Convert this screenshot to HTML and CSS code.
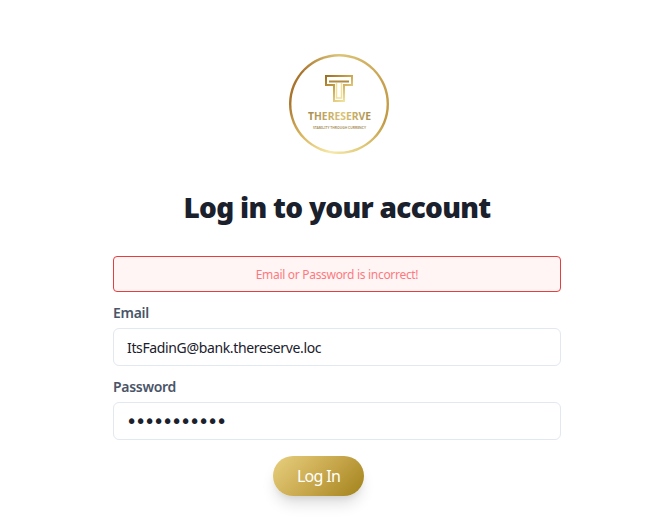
FILE: index.html
```html
<!DOCTYPE html>
<html lang="en">
<head>
<meta charset="utf-8">
<title>Log in</title>
<link rel="stylesheet" href="styles.css">
</head>
<body>
<main class="page">
  <div class="logo">
    <svg class="logo-svg" width="100" height="100" viewBox="0 0 100 100" xmlns="http://www.w3.org/2000/svg">
      <defs>
        <linearGradient id="tee" x1="0" y1="0" x2="0.8" y2="1">
          <stop offset="0" stop-color="#9c6f22"/>
          <stop offset="0.45" stop-color="#c9a44e"/>
          <stop offset="1" stop-color="#f4e8a4"/>
        </linearGradient>
        <linearGradient id="word" x1="0" y1="0" x2="1" y2="0">
          <stop offset="0" stop-color="#a58a4e"/>
          <stop offset="0.55" stop-color="#dcc375"/>
          <stop offset="1" stop-color="#a88c4c"/>
        </linearGradient>
      </defs>
      <circle cx="50" cy="50" r="47.600" fill="#fff"/>
      <path d="M37 22H63V31H55V47H45V31H37Z" fill="#fff" stroke="url(#tee)" stroke-width="2"/>
      <path d="M47.500 29V44H52.500V29" fill="none" stroke="#efe09c" stroke-width="1.500"/>
      <path d="M40 27.500H60" stroke="#b08a3e" stroke-width="1.800"/>
      <text class="logo-word" x="50.500" y="65.500" text-anchor="middle" textLength="63" lengthAdjust="spacingAndGlyphs" fill="url(#word)">THERESERVE</text>
      <text class="logo-tag" x="50.500" y="74.500" text-anchor="middle" textLength="53" lengthAdjust="spacingAndGlyphs">STABILITY THROUGH CURRENCY</text>
    </svg>
  </div>
  <h1 class="title">Log in to your account</h1>
  <form class="form">
    <div class="alert">Email or Password is incorrect!</div>
    <label class="label" for="email">Email</label>
    <input class="input" id="email" type="text" value="ItsFadinG@bank.thereserve.loc">
    <label class="label" for="password">Password</label>
    <input class="input input-password" id="password" type="password" value="passwordxyz">
    <button class="button" type="button">Log In</button>
  </form>
</main>
</body>
</html>
```
FILE: styles.css
```css
* { box-sizing: border-box; }
html, body { margin: 0; padding: 0; background: #fff; }
body { font-family: "Noto Sans", sans-serif; color: #1a202c; min-height: 527px; }
.page {
  width: 448px;
  margin-left: 113px;
  padding-top: 54px;
  display: flex;
  flex-direction: column;
}
.logo { display: flex; justify-content: center; padding-left: 4px; height: 100px; }
.logo-svg {
  display: block;
  border-radius: 50%;
  background: conic-gradient(#dcc578 0deg, #c9a24f 60deg, #c09a45 110deg, #e0c878 150deg, #f6e9a8 190deg, #d9b660 230deg, #a9762f 270deg, #a8742c 310deg, #dcc578 360deg);
}
.logo-word { font: 700 10px "Noto Sans", sans-serif; }
.logo-tag { font: 600 3.600px "Noto Sans", sans-serif; fill: #a58a4e; }
.title {
  margin: 33px 0 0;
  text-align: center;
  font-size: 28px;
  letter-spacing: -0.7px;
  line-height: 40px;
  font-weight: 900;
  color: #1a202c;
}
.form { display: flex; flex-direction: column; margin-top: 29px; }
.alert {
  height: 36px;
  border: 1px solid #e53e3e;
  border-radius: 4px;
  background: #fff5f5;
  color: #fc7a7f;
  font-size: 12px;
  letter-spacing: -0.3px;
  line-height: 36px;
  text-align: center;
}
.label {
  margin-top: 11px;
  font-size: 14px;
  letter-spacing: -0.3px;
  line-height: 20px;
  font-weight: 600;
  color: #4a5568;
}
.input {
  margin-top: 5px;
  height: 38px;
  width: 100%;
  padding: 0 13px;
  border: 1px solid #e2e8f0;
  border-radius: 6px;
  background: #fff;
  color: #1a202c;
  font: 400 14px "Noto Sans", sans-serif;
  letter-spacing: -0.36px;
  outline: none;
}
.input-password {
  font-family: "DejaVu Sans", sans-serif;
  font-size: 19px;
  letter-spacing: -2.2px;
  padding-left: 12px;
}
.button {
  align-self: flex-start;
  margin: 16px 0 0 160px;
  width: 91px;
  height: 40px;
  border: 0;
  border-radius: 20px;
  background: linear-gradient(135deg, #e8cf7f 0%, #c9a94e 50%, #a1821a 100%);
  color: #fff;
  font: 400 16px "Noto Sans", sans-serif;
  letter-spacing: -0.7px;
  box-shadow: 0 10px 15px -3px rgba(0,0,0,.14), 0 4px 6px -2px rgba(0,0,0,.07);
}
```
